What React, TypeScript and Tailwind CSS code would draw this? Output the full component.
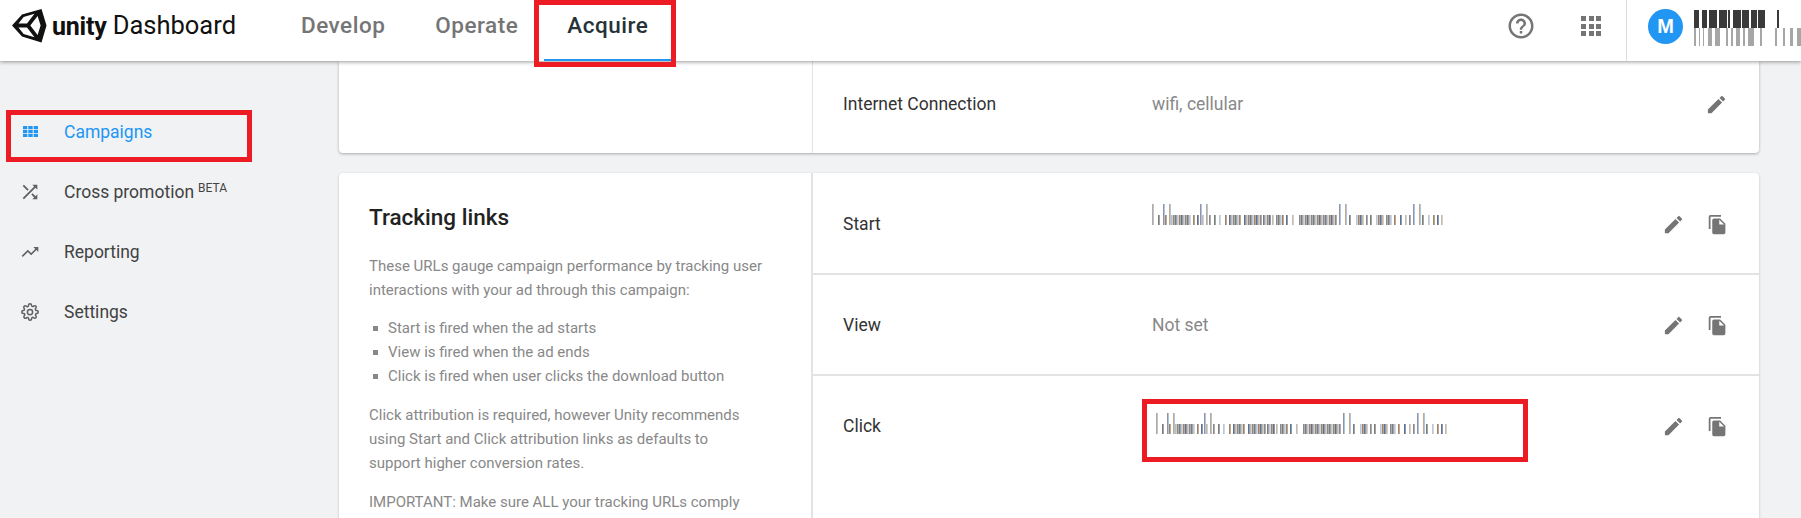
import React from "react";

const FONT = "font-['Roboto','Liberation_Sans',sans-serif]";

function UnityLogo() {
  return (
    <svg width="35" height="35" viewBox="0 0 35 35" className="shrink-0">
      <path
        fill="#111"
        fillRule="evenodd"
        d="M0 16.5 10 5.5 29.5 0 34.5 16.5 29.5 33.5 10 27.5ZM6.5 14.6H15L22.5 4.7 11.6 8ZM6.5 18.4 11.6 25 22.5 28.3 15 18.4ZM18.3 16.5 25.6 26 28.6 16.5 25.6 7Z"
      />
    </svg>
  );
}

function Pencil() {
  return (
    <svg width="23" height="23" viewBox="0 0 24 24" fill="#757575">
      <path d="M3 17.25V21h3.75L17.81 9.94l-3.75-3.75L3 17.25zM20.71 7.04a1 1 0 0 0 0-1.41l-2.34-2.34a1 1 0 0 0-1.41 0l-1.83 1.83 3.75 3.75 1.83-1.83z" />
    </svg>
  );
}

function CopyDoc() {
  return (
    <svg width="21" height="21" viewBox="0 0 24 24" fill="#757575">
      <path d="M16 1H4a2 2 0 0 0-2 2v14h2V3h12V1zm-1 4 6 6v10a2 2 0 0 1-2 2H8a2 2 0 0 1-2-2V7c0-1.1.9-2 2-2h7zm-1 7h5.5L14 6.5V12z" />
    </svg>
  );
}

const STRIPES = ["#7c7c7c", "#b9c8da", "#a08468", "#5f7190", "#c4bbb0", "#8a8a8a"];

function Barcode({ tall, short, width }: { tall: number[]; short: [number, number][]; width: number }) {
  const rects: React.ReactElement[] = [];
  let n = 0;
  short.forEach(([a, b]) => {
    for (let x = a; x <= b; x += 2) {
      rects.push(<rect key={`s${x}`} x={x} y={11} width={1.7} height={10} fill={STRIPES[n++ % STRIPES.length]} />);
    }
  });
  tall.forEach((x, i) => {
    rects.push(<rect key={`t${i}`} x={x} y={0} width={1} height={21} fill={i % 2 ? "#9a8fa8" : "#c4a888"} />);
    rects.push(<rect key={`u${i}`} x={x + 1} y={0} width={1} height={21} fill="#a9c6e2" />);
  });
  return (
    <svg width={width} height="21" viewBox={`0 0 ${width} 21`} className="block">
      {rects}
    </svg>
  );
}

const SHORT: [number, number][] = [
  [6, 6], [11, 13], [17, 29], [31, 38], [41, 41], [45, 45], [50, 50], [57, 57], [62, 62], [67, 67], [73, 73],
  [77, 87], [92, 100], [102, 108], [111, 117], [120, 120], [124, 131], [134, 134], [140, 140], [147, 184],
  [197, 197], [204, 211], [214, 214], [218, 218], [224, 231], [234, 239], [242, 242], [248, 248], [253, 253],
  [257, 257], [270, 270], [276, 276], [281, 281], [285, 285], [289, 289],
];

function Avatar() {
  const top = [
    [1694, 5], [1702, 5], [1709, 8], [1719, 8], [1728, 2], [1733, 8], [1742, 7], [1751, 6], [1758, 7], [1777, 2],
  ];
  const bottom = [
    [1694, 2], [1699, 1], [1703, 1], [1708, 4], [1715, 5], [1726, 2], [1731, 2], [1736, 4], [1743, 2], [1748, 6],
    [1760, 2], [1775, 2], [1783, 2], [1790, 3], [1797, 4],
  ];
  return (
    <svg width="107" height="36" viewBox="1694 10 107 36" className="block">
      {top.map(([x, w]) => (
        <rect key={x} x={x} y="10" width={w} height="18" fill="#3a3a3a" />
      ))}
      {bottom.map(([x, w]) => (
        <rect key={x} x={x} y="28" width={w} height="18" fill="#a6a6a6" />
      ))}
    </svg>
  );
}

function NavItem({ icon, label, active, sup }: { icon: React.ReactNode; label: string; active?: boolean; sup?: string }) {
  return (
    <div className={`flex h-[60px] items-center text-[17.5px] ${active ? "text-[#2196f3]" : "text-[#424242]"}`}>
      <span className="ml-[19px] mr-[23px] flex w-[22px] items-center justify-center">{icon}</span>
      <span>{label}</span>
      {sup && <span className="mb-[8px] ml-[4px] text-[12px]">{sup}</span>}
    </div>
  );
}

function Row({ label, value, className, actions }: { label: string; value: React.ReactNode; className?: string; actions?: boolean }) {
  return (
    <div className={`flex items-center pl-[30px] pr-[31px] text-[17.5px] ${className ?? ""}`}>
      <div className="w-[309px] text-[#333]">{label}</div>
      <div className="flex-1 text-[#888]">{value}</div>
      <div className="flex items-center gap-[22px]">
        <Pencil />
        {actions && <CopyDoc />}
      </div>
    </div>
  );
}

const TALL = [0, 11, 17, 48, 54, 187, 193, 261, 267];

export default function App() {
  return (
    <div className={`relative h-[518px] w-[1801px] overflow-hidden bg-[#f1f2f4] ${FONT}`}>
      <header className="relative z-10 flex h-[61px] items-center bg-white shadow-[0_1px_4px_rgba(0,0,0,0.4)]">
        <div className="ml-[12px] flex w-[289px] items-center pb-[9px]">
          <UnityLogo />
          <span className="ml-[5px] text-[25px] font-bold leading-none tracking-[-0.2px] text-[#111]">unity</span>
          <span className="ml-[6px] text-[25.5px] leading-none text-[#111]">Dashboard</span>
        </div>
        <nav className="flex h-full text-[22.5px] font-medium tracking-[0.5px] text-[#757575]">
          <div className="flex items-center pb-[9px] pr-[50px]">Develop</div>
          <div className="flex items-center pb-[9px] pr-[26px]">Operate</div>
          <div className="flex h-full w-[127px] items-center justify-center border-b-[2px] border-[#2196f3] pb-[7px] text-[#263238]">Acquire</div>
        </nav>
        <div className="ml-auto flex h-full items-center">
          <div className="flex items-center pb-[9px]">
            <svg width="30" height="30" viewBox="0 0 24 24" fill="#757575">
              <path d="M11 18h2v-2h-2v2zm1-16C6.48 2 2 6.48 2 12s4.48 10 10 10 10-4.48 10-10S17.52 2 12 2zm0 18c-4.41 0-8-3.59-8-8s3.59-8 8-8 8 3.59 8 8-3.590 8-8 8zm0-14c-2.210 0-4 1.790-4 4h2c0-1.100.9-2 2-2s2 .9 2 2c0 2-3 1.750-3 5h2c0-2.250 3-2.500 3-5 0-2.210-1.790-4-4-4z" />
            </svg>
            <div className="ml-[45px] grid h-[20px] w-[20px] grid-cols-3 gap-[2.5px]">
              {Array.from({ length: 9 }).map((_, i) => (
                <span key={i} className="bg-[#757575]" />
              ))}
            </div>
          </div>
          <div className="ml-[25px] flex h-full items-center border-l border-[#dcdcdc] pb-[9px] pl-[21px]">
            <div className="flex h-[35px] w-[35px] items-center justify-center rounded-full bg-[#2196f3] font-['Liberation_Sans',sans-serif] text-[20px] font-bold text-white">M</div>
            <div className="ml-[11px] mt-[4px]"><Avatar /></div>
          </div>
        </div>
      </header>

      <div className="flex">
        <aside className="w-[339px] shrink-0 pt-[41px]">
          <NavItem
            active
            label="Campaigns"
            icon={
              <svg width="15" height="11" viewBox="0 0 15 11" fill="#2196f3" className="mb-[2px] shrink-0">
                <path d="M0 0h4.300v3.200H0zM5.300 0h4.400v3.200H5.300zM10.700 0H15v3.200h-4.300zM0 4h4.300v3H0zM5.300 4h4.400v3H5.300zM10.700 4H15v3h-4.300zM0 7.800h4.300V11H0zM5.300 7.800h4.400V11H5.300zM10.700 7.800H15V11h-4.300z" />
              </svg>
            }
          />
          <NavItem
            label="Cross promotion"
            sup="BETA"
            icon={
              <svg width="22" height="22" viewBox="0 0 24 24" fill="#616161" className="mb-[1px] shrink-0">
                <path d="M10.590 9.170 5.410 4 4 5.410l5.170 5.170 1.420-1.410zM14.500 4l2.040 2.040L4 18.590 5.410 20 17.960 7.460 20 9.500V4h-5.500zm.33 9.410-1.410 1.410 3.130 3.130L14.500 20H20v-5.500l-2.040 2.040-3.130-3.130z" />
              </svg>
            }
          />
          <NavItem
            label="Reporting"
            icon={
              <svg width="20" height="20" viewBox="0 0 24 24" fill="#616161" className="mb-[1px] shrink-0">
                <path d="m16 6 2.290 2.290-4.880 4.880-4-4L2 16.590 3.410 18l6-6 4 4 6.300-6.290L22 12V6z" />
              </svg>
            }
          />
          <NavItem
            label="Settings"
            icon={
              <svg width="18" height="18" viewBox="0 0 24 24" fill="none" stroke="#616161" strokeWidth="2" className="mb-[1px] shrink-0">
                <circle cx="12" cy="12" r="3.500" />
                <path d="M19.400 15a1.650 1.650 0 0 0 .33 1.820l.06.06a2 2 0 1 1-2.830 2.830l-.06-.06a1.650 1.650 0 0 0-2.800 1.170V21a2 2 0 1 1-4 0v-.09a1.650 1.650 0 0 0-2.800-1.170l-.06.06a2 2 0 1 1-2.830-2.830l.06-.06A1.650 1.650 0 0 0 3.090 14H3a2 2 0 1 1 0-4h.09a1.650 1.650 0 0 0 1.170-2.800l-.06-.06a2 2 0 1 1 2.830-2.830l.06.06A1.650 1.650 0 0 0 10 3.090V3a2 2 0 1 1 4 0v.09a1.650 1.650 0 0 0 2.800 1.170l.06-.06a2 2 0 1 1 2.830 2.830l-.06.06A1.650 1.650 0 0 0 20.910 10H21a2 2 0 1 1 0 4h-.09a1.650 1.650 0 0 0-1.510 1z" />
              </svg>
            }
          />
        </aside>

        <main className="w-[1420px] shrink-0">
          <section className="flex h-[92px] rounded-b-[4px] bg-white shadow-[0_1px_3px_rgba(0,0,0,0.3)]">
            <div className="w-[474px] shrink-0 border-r border-[#e3e3e3]" />
            <div className="flex-1">
              <Row label="Internet Connection" value="wifi, cellular" className="h-[86px]" />
            </div>
          </section>

          <section className="mt-[20px] flex h-[400px] rounded-t-[4px] bg-white shadow-[0_1px_3px_rgba(0,0,0,0.2)]">
            <div className="w-[474px] shrink-0 border-r-2 border-[#e3e3e3] pl-[30px] pr-[42px] text-[15px] leading-[24px] text-[#888]">
              <h2 className="mt-[29px] text-[22.5px] font-medium leading-[30px] text-[#222]">Tracking links</h2>
              <p className="mt-[22px]">These URLs gauge campaign performance by tracking user interactions with your ad through this campaign:</p>
              <ul className="mt-[14px]">
                {["Start is fired when the ad starts", "View is fired when the ad ends", "Click is fired when user clicks the download button"].map((t) => (
                  <li key={t} className="flex items-center pl-[4px]">
                    <span className="mr-[10px] h-[5px] w-[5px] bg-[#888]" />
                    {t}
                  </li>
                ))}
              </ul>
              <p className="mt-[15px]">
                Click attribution is required, however Unity recommends using Start and Click attribution links as defaults to
                <br />
                support higher conversion rates.
              </p>
              <p className="mt-[15px]">IMPORTANT: Make sure ALL your tracking URLs comply</p>
            </div>
            <div className="flex-1">
              <Row
                actions
                label="Start"
                className="h-[102px] border-b-2 border-[#e3e3e3] pt-[2px]"
                value={
                  <div className="-mt-[19px]">
                    <Barcode width={291} tall={TALL} short={SHORT} />
                  </div>
                }
              />
              <Row actions label="View" value="Not set" className="h-[101px] border-b-2 border-[#e3e3e3] pt-[1px]" />
              <Row
                actions
                label="Click"
                className="h-[101px] pb-[1px]"
                value={
                  <div className="relative left-[4px] -top-[3px]">
                    <Barcode width={291} tall={TALL} short={SHORT} />
                  </div>
                }
              />
            </div>
          </section>
        </main>
      </div>

      <div className="absolute left-[534px] top-0 z-20 h-[67px] w-[142px] border-[5px] border-[#ed1c24]" />
      <div className="absolute left-[6px] top-[110px] z-20 h-[52px] w-[246px] border-[5px] border-[#ed1c24]" />
      <div className="absolute left-[1142px] top-[399px] z-20 h-[63px] w-[386px] border-[5px] border-[#ed1c24]" />
    </div>
  );
}
